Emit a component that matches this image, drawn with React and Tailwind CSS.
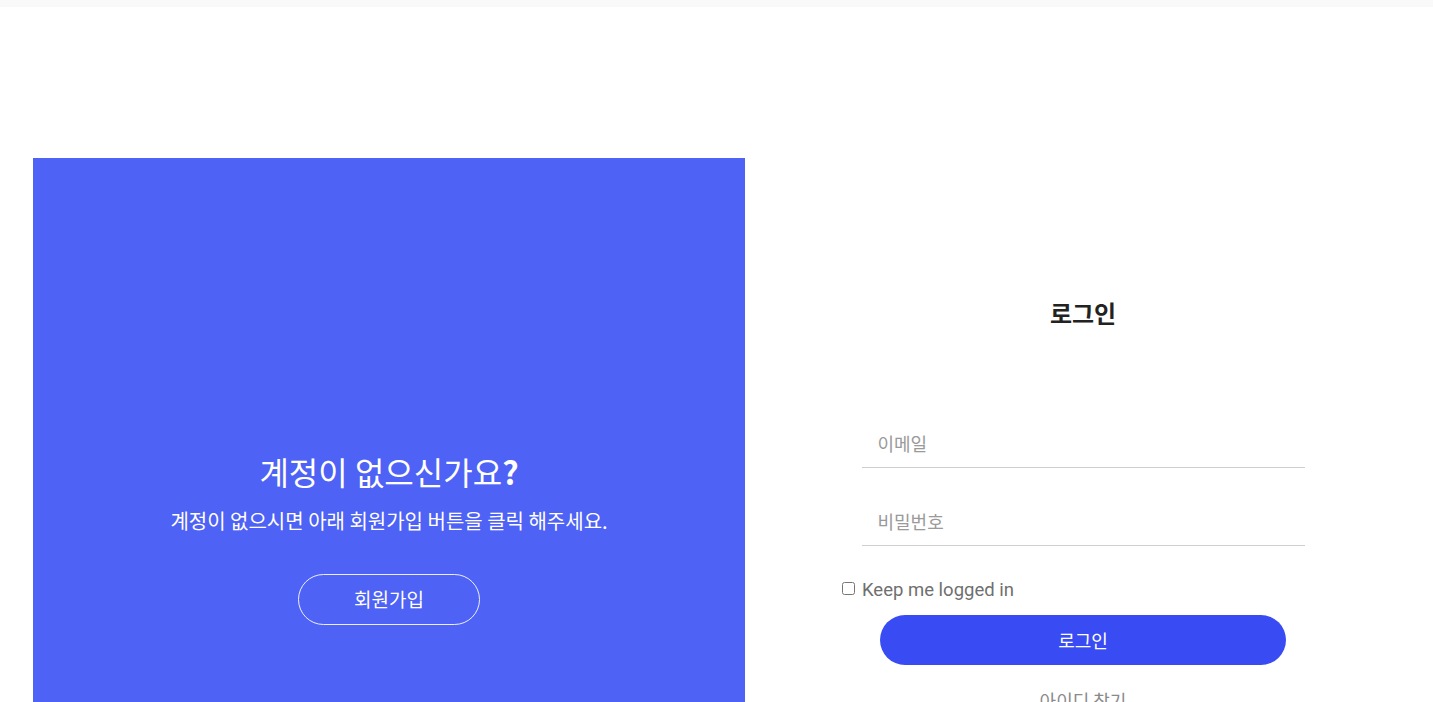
export default function App() {
  return (
    <div className="min-h-screen bg-white overflow-hidden" style={{ fontFamily: '"Noto Sans CJK KR", "Noto Sans", sans-serif' }}>
      {/* top strip */}
      <div className="h-[7px] bg-[#f9f9f9]" />

      <div className="flex pt-[151px] pl-[33px]">
        {/* left: sign up promo */}
        <div className="w-[712px] h-[560px] bg-[#4e62f5] flex flex-col items-center text-white">
          <h2 className="mt-[291px] text-[32px] leading-[44px] font-normal">
            계정이 없으신가요<span className="font-bold">?</span>
          </h2>
          <p className="mt-[14px] text-[20px] leading-[28px]">계정이 없으시면 아래 회원가입 버튼을 클릭 해주세요.</p>
          <button className="mt-[39px] w-[182px] h-[51px] rounded-full border border-white/90 text-[19px]">회원가입</button>
        </div>

        {/* right: login form */}
        <div className="w-[676px] flex flex-col items-center pt-[139px]">
          <h1 className="text-[24px] leading-[32px] font-bold text-[#222]">로그인</h1>
          <div className="mt-[89px] w-[443px] flex flex-col gap-[28px]">
            <input
              type="text"
              placeholder="이메일"
              className="h-[50px] w-full border-b border-[#cfcfcf] px-4 text-[18px] text-[#333] placeholder:text-[#9a9a9a] outline-none"
            />
            <input
              type="password"
              placeholder="비밀번호"
              className="h-[50px] w-full border-b border-[#cfcfcf] px-4 text-[18px] text-[#333] placeholder:text-[#9a9a9a] outline-none"
            />
          </div>
          <label className="mt-[34px] self-start ml-[97px] flex items-center gap-[7px] text-[18.5px] leading-[20px] text-[#6f6f6f]" style={{ fontFamily: 'Roboto, "Noto Sans", sans-serif' }}>
            <input type="checkbox" className="w-[13px] h-[13px] -mt-[4px]" />
            Keep me logged in
          </label>
          <button className="mt-[15px] w-[406px] h-[50px] rounded-full bg-[#394cf3] text-white text-[18px]">로그인</button>
          <p className="mt-[22px] text-[18px] text-[#8a8a8a]">아이디 찾기</p>
        </div>
      </div>
    </div>
  );
}
